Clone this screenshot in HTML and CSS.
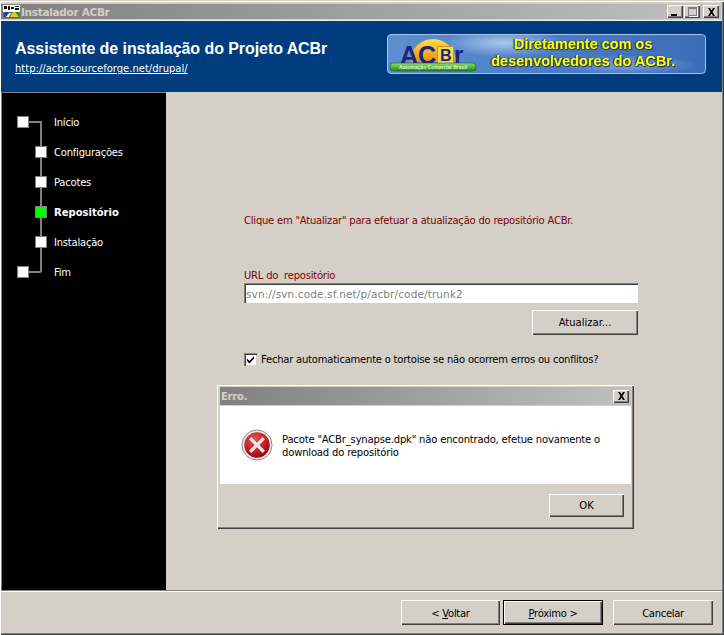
FILE: index.html
```html
<!DOCTYPE html>
<html lang="pt">
<head>
<meta charset="utf-8">
<title>Instalador ACBr</title>
<link rel="stylesheet" href="styles.css">
</head>
<body>
<div class="window">
  <div class="titlebar">
    <svg class="appicon" width="17" height="13" viewBox="0 0 17 13">
      <rect width="17" height="7" fill="#fff"/>
      <path d="M1 1h3v3h-3zM5 1h2v4h-2zM8 2h3v2h-3zM12 1h4v1h-4zM12 3h4v2h-4z" fill="#111"/>
      <rect y="7" width="17" height="6" fill="#2b8a3e"/>
      <rect x="1" y="7" width="6" height="5" fill="#2a3f9d"/>
      <path d="M7 12l3-5h2l4 5z" fill="#e8c820"/>
      <path d="M3 12l3-4h2l-2 4z" fill="#fff"/>
    </svg>
    <span class="titletext">Instalador ACBr</span>
    <div class="wincontrols">
      <div class="capbtn"><span class="glyph-min"></span></div>
      <div class="capbtn"><span class="glyph-max"></span></div>
      <div class="capbtn capbtn-close"><svg width="9" height="8" viewBox="0 0 9 8"><path d="M1 0h2l1.500 2.500L6 0h2L5.500 4 8 8H6L4.500 5.500 3 8H1l2.500-4z" fill="#000"/></svg></div>
    </div>
  </div>

  <header class="header">
    <div class="headtext">
      <h1 class="headtitle">Assistente de instalação do Projeto ACBr</h1>
      <a class="headlink" href="#">http://acbr.sourceforge.net/drupal/</a>
    </div>
    <div class="banner">
      <svg class="logo" width="92" height="38" viewBox="0 0 92 38">
        <defs>
          <linearGradient id="sun" x1="0" y1="0" x2="0" y2="1"><stop offset="0" stop-color="#ffe04a"/><stop offset="1" stop-color="#f08a10"/></linearGradient>
          <linearGradient id="bar" x1="0" y1="0" x2="0" y2="1"><stop offset="0" stop-color="#8fe060"/><stop offset="1" stop-color="#1f8a28"/></linearGradient>
        </defs>
        <path d="M22 27a23 23 0 0 1 46 0z" fill="url(#sun)"/>
        <text x="12" y="29" class="logo-ac">AC</text>
        <rect x="49.500" y="11.500" width="16" height="17" fill="#f4dc50" stroke="#c89a10"/>
        <text x="52" y="26" class="logo-b">B</text>
        <text x="66" y="28" class="logo-r">r</text>
        <rect x="2" y="28" width="86" height="8" rx="3.500" fill="url(#bar)" stroke="#14551a" stroke-width=".6"/>
        <text x="45" y="34" class="logo-sub">Automação Comercial Brasil</text>
      </svg>
      <div class="bannertext">Diretamente com os<br>desenvolvedores do ACBr.</div>
    </div>
  </header>

  <div class="main">
    <nav class="sidebar">
      <div class="rail"></div>
      <div class="step step-root"><span class="node"></span><span class="steplabel">Início</span></div>
      <div class="step"><span class="node"></span><span class="steplabel">Configurações</span></div>
      <div class="step"><span class="node"></span><span class="steplabel">Pacotes</span></div>
      <div class="step step-active"><span class="node"></span><span class="steplabel">Repositório</span></div>
      <div class="step"><span class="node"></span><span class="steplabel">Instalação</span></div>
      <div class="step step-root step-end"><span class="node"></span><span class="steplabel">Fim</span></div>
    </nav>
    <main class="content">
      <p class="hint">Clique em "Atualizar" para efetuar a atualização do repositório ACBr.</p>
      <label class="urllabel">URL do&nbsp; repositório</label>
      <div class="urlfield">svn://svn.code.sf.net/p/acbr/code/trunk2</div>
      <div class="updaterow"><button class="btn btn-update">Atualizar...</button></div>
      <div class="checkrow">
        <span class="check"><svg width="9" height="9" viewBox="0 0 9 9"><path d="M1 3.500l2.500 2.500L8 1v2.500L3.500 8.500 1 6z" fill="#000"/></svg></span>
        <span>Fechar automaticamente o tortoise se não ocorrem erros ou conflitos?</span>
      </div>
    </main>
  </div>

  <footer class="footer">
    <button class="btn btn-wizard btn-back"><span>&lt; <u>V</u>oltar</span></button>
    <button class="btn btn-wizard btn-default"><span><u>P</u>róximo &gt;</span></button>
    <button class="btn btn-wizard btn-cancel"><span>Cancelar</span></button>
  </footer>

  <div class="dialog">
    <div class="dlgtitle">
      <span class="dlgcaption">Erro.</span>
      <div class="capbtn capbtn-close"><svg width="9" height="8" viewBox="0 0 9 8"><path d="M1 0h2l1.500 2.500L6 0h2L5.500 4 8 8H6L4.500 5.500 3 8H1l2.500-4z" fill="#000"/></svg></div>
    </div>
    <div class="dlgbody">
      <svg class="erroricon" width="32" height="32" viewBox="0 0 34 34">
        <defs>
          <radialGradient id="red" cx=".4" cy=".3" r=".8"><stop offset="0" stop-color="#e8555a"/><stop offset=".6" stop-color="#bf1a22"/><stop offset="1" stop-color="#7c0a10"/></radialGradient>
        </defs>
        <circle cx="17" cy="17" r="16" fill="#e4e4e4" stroke="#8a8a8a"/>
        <circle cx="17" cy="17" r="13.500" fill="url(#red)"/>
        <path d="M11 8.500l6 6 6-6 2.500 2.500-6 6 6 6-2.500 2.500-6-6-6 6-2.500-2.500 6-6-6-6z" fill="#ece6e6"/>
      </svg>
      <p class="dlgmsg">Pacote "ACBr_synapse.dpk" não encontrado, efetue novamente o<br>download do repositório</p>
    </div>
    <div class="dlgfoot"><button class="btn btn-ok">OK</button></div>
  </div>
</div>
</body>
</html>
```
FILE: styles.css
```css
* { box-sizing: border-box; }
html, body { margin: 0; padding: 0; }
body { width: 724px; height: 635px; overflow: hidden; background: #d4d0c8; font-family: "DejaVu Sans", sans-serif; font-size: 10px; letter-spacing: -.22px; color: #000; }
p, h1 { margin: 0; }

.window { position: relative; width: 724px; height: 635px; display: flex; flex-direction: column; background: #d4d0c8; padding: 3px 2px 2px 1px; border-top: 1px solid #d4d0c8; box-shadow: inset 1px 1px 0 #fff, inset -1px -1px 0 #404040, inset -2px -2px 0 #808080; }

.titlebar { height: 15px; margin: 0 1px 0 0; display: flex; align-items: center; background: linear-gradient(90deg, #808080, #c0c0c0); flex: none; padding-left: 2px; }
.appicon { flex: none; }
.titletext { color: #d4d0c8; font: bold 10.500px "DejaVu Sans", sans-serif; letter-spacing: -.3px; margin-left: 1px; }
.wincontrols { margin-left: auto; display: flex; gap: 1px; padding-right: 2px; }
.capbtn { width: 16px; height: 13px; background: #d4d0c8; box-shadow: inset 1px 1px 0 #fff, inset -1px -1px 0 #404040, inset -2px -2px 0 #808080; display: flex; align-items: center; justify-content: center; position: relative; flex: none; }
.capbtn-close { margin-left: 2px; }
.glyph-min { width: 6px; height: 2px; background: #000; margin-top: 6px; margin-right: 2px; }
.glyph-max { width: 9px; height: 9px; border: 1px solid #808080; border-top-width: 2px; box-shadow: 1px 1px 0 #fff; }

.header { margin-top: 1px; height: 72px; flex: none; background: #003c7e; display: flex; align-items: flex-start; border-top: 1px solid #f0f0f0; padding: 14px 0 0 14px; }
.headtext { width: 372px; flex: none; color: #fff; }
.headtitle { font: bold 16px/20px "Liberation Sans", sans-serif; letter-spacing: -.07px; margin-top: 4px; }
.headlink { display: block; color: #fff; font-size: 10px; letter-spacing: 0; line-height: 14px; margin-top: 3px; }
.banner { width: 319px; height: 40px; margin-top: -1px; flex: none; border-radius: 4px; border: 1px solid #a9c4e8; display: flex; overflow: hidden; background: radial-gradient(ellipse 60px 14px at 115px 8px, #a9c8ea, transparent), radial-gradient(ellipse 70px 10px at 240px 30px, #7fa6d8, transparent), linear-gradient(90deg, #5d8fcf, #4a7cc4 55%, #3a6cb8); }
.logo { flex: none; }
.bannertext { flex: 1; text-align: center; color: #ffff00; font: bold 14.500px/17px "Liberation Sans", sans-serif; letter-spacing: 0; padding: 1px 19px 0 0; text-shadow: 1px 1px 1px #1a2a50, -1px 0 1px #1a2a50; white-space: nowrap; }
.logo-ac { font: bold 25px "Liberation Sans", sans-serif; fill: #1c2484; letter-spacing: 0; }
.logo-b { font: bold 16px "Liberation Sans", sans-serif; fill: #1c2484; letter-spacing: 0; }
.logo-r { font: bold 24px "Liberation Sans", sans-serif; fill: #1c2484; letter-spacing: 0; }
.logo-sub { font: bold 5px "Liberation Sans", sans-serif; fill: #e0f0d0; text-anchor: middle; letter-spacing: 0; }

.main { flex: 1; display: flex; min-height: 0; border-bottom: 1px solid #808080; box-shadow: 0 1px 0 #fff; }
.sidebar { position: relative; width: 165px; flex: none; background: #000; border-top: 1px solid #808080; border-left: 1px solid #808080; padding-top: 14px; color: #fff; }
.rail { position: absolute; left: 38px; top: 28px; width: 2px; height: 151px; background: #808080; }
.step { position: relative; height: 30px; display: flex; align-items: center; padding-left: 33px; }
.step-root { padding-left: 15px; }
.step-root::after { content: ""; position: absolute; left: 27px; top: 14px; width: 12px; height: 2px; background: #808080; }
.node { position: relative; z-index: 1; width: 12px; height: 12px; flex: none; background: #fff; border: 1px solid #808080; }
.steplabel { position: absolute; left: 52px; }
.step-active .node { background: #00ff00; }
.step-active .steplabel { font-weight: bold; letter-spacing: 0; }

.content { flex: 1; color: #800000; padding: 122px 0 0 78px; }
.hint { line-height: 14px; }
.urllabel { display: block; line-height: 14px; margin-top: 41px; }
.urlfield { width: 394px; height: 20px; background: #fff; color: #808080; line-height: 19px; padding: 2px 0 0 2px; box-shadow: inset 1px 1px 0 #808080, inset 2px 2px 0 #404040, inset -1px -1px 0 #fff; font-size: 10.500px; letter-spacing: .12px; }
.updaterow { display: flex; justify-content: flex-end; width: 394px; margin-top: 7px; }
.btn { background: #d4d0c8; border: 0; padding: 0; color: #000; font: 10px "DejaVu Sans", sans-serif; box-shadow: inset 1px 1px 0 #fff, inset -1px -1px 0 #404040, inset -2px -2px 0 #808080; flex: none; }
.btn-update { width: 106px; height: 25px; }
.checkrow { display: flex; align-items: center; color: #000; margin-top: 17px; gap: 4px; height: 14px; }
.check { width: 13px; height: 13px; flex: none; background: #fff; display: flex; align-items: center; justify-content: center; box-shadow: inset 1px 1px 0 #808080, inset 2px 2px 0 #404040, inset -1px -1px 0 #d4d0c8; }

.footer { height: 42px; flex: none; display: flex; align-items: flex-start; padding: 9px 9px 0 0; justify-content: flex-end; gap: 3px; }
.btn-wizard { width: 100px; height: 25px; letter-spacing: -.3px; padding-top: 2px; }
.btn-back { width: 99px; }
.btn-cancel { margin-left: 7px; }
.btn-default { outline: 1px solid #000; outline-offset: -1px; box-shadow: inset 2px 2px 0 #fff, inset -2px -2px 0 #404040, inset -3px -3px 0 #808080; }
.btn-wizard u { text-underline-offset: 1px; }

.dialog { position: absolute; left: 217px; top: 384px; width: 417px; height: 144px; display: flex; flex-direction: column; padding: 2px 3px 4px 3px; background: #d4d0c8; box-shadow: inset 1px 1px 0 #fff, inset -1px -1px 0 #404040, inset -2px -2px 0 #808080; }
.dlgtitle { height: 18px; flex: none; display: flex; align-items: center; justify-content: space-between; background: linear-gradient(90deg, #808080, #c0c0c0); padding: 0 2px 0 1px; }
.dlgcaption { color: #d4d0c8; font: bold 10px "DejaVu Sans", sans-serif; }
.dlgbody { height: 78px; flex: none; margin-top: 1px; background: #fff; display: flex; align-items: flex-start; padding: 23px 0 0 21px; }
.erroricon { flex: none; margin-right: 9px; }
.dlgmsg { line-height: 13px; padding-top: 4px; letter-spacing: -.17px; }
.dlgfoot { flex: 1; display: flex; justify-content: flex-end; padding: 10px 7px 0 0; }
.btn-ok { width: 75px; height: 23px; }
```
